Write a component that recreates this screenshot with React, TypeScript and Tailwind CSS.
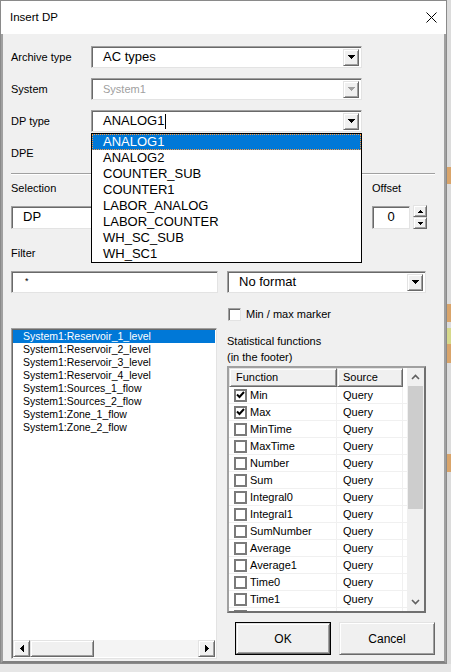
import React from 'react';

const sunken =
  'border border-t-[#a0a0a0] border-l-[#a0a0a0] border-r-[#e3e3e3] border-b-[#e3e3e3] shadow-[inset_1px_1px_0_#696969]';
const raised =
  'bg-[#f0f0f0] border border-t-[#e3e3e3] border-l-[#e3e3e3] border-r-[#696969] border-b-[#696969] shadow-[inset_1px_1px_0_#ffffff,inset_-1px_-1px_0_#a0a0a0]';

const Tri: React.FC<{ dir: 'up' | 'down' | 'left' | 'right'; color?: string; size?: number }> = ({
  dir,
  color = '#000',
  size = 7,
}) => {
  const h = Math.ceil(size / 2);
  const pts =
    dir === 'down'
      ? `0,0 ${size},0 ${size / 2},${h}`
      : dir === 'up'
        ? `0,${h} ${size},${h} ${size / 2},0`
        : dir === 'left'
          ? `${h},0 ${h},${size} 0,${size / 2}`
          : `0,0 0,${size} ${h},${size / 2}`;
  const w = dir === 'up' || dir === 'down' ? size : h;
  const hh = dir === 'up' || dir === 'down' ? h : size;
  return (
    <svg width={w} height={hh} viewBox={`0 0 ${w} ${hh}`} shapeRendering="crispEdges">
      <polygon points={pts} fill={color} />
    </svg>
  );
};

const Chevron: React.FC<{ up?: boolean }> = ({ up }) => (
  <svg width="9" height="6" viewBox="0 0 9 6">
    <path d={up ? 'M1 5l3.5-3.5L8 5' : 'M1 1l3.5 3.5L8 1'} stroke="#606060" strokeWidth="1.6" fill="none" />
  </svg>
);

interface ComboProps {
  text?: string;
  className: string;
  disabled?: boolean;
  textClass?: string;
  caret?: boolean;
}

const Combo: React.FC<ComboProps> = ({ text, className, disabled, textClass = 'text-[13px]', caret }) => (
  <div className={`${sunken} ${className} h-[22px] bg-white flex items-center`}>
    <span className={`flex-1 pl-[11px] flex items-center ${textClass} ${disabled ? 'text-[#a0a0a0]' : 'text-black'}`}>
      {text}
      {caret && <span className="inline-block w-px h-[15px] bg-black ml-px" />}
    </span>
    <div className={`${raised} w-[16px] h-[17px] mr-[2px] flex items-center justify-center`}>
      <Tri dir="down" color={disabled ? '#a0a0a0' : '#000'} />
    </div>
  </div>
);

const Check: React.FC<{ checked?: boolean; thin?: boolean }> = ({ checked, thin }) => (
  <div
    className={`w-[13px] h-[13px] bg-white flex items-center justify-center shrink-0 ${
      thin ? sunken : 'border-2 border-[#7a7a7a]'
    }`}
  >
    {checked && (
      <svg width="9" height="8" viewBox="0 0 9 8">
        <path d="M1 3.5l2.5 2.5L8 1" stroke="#000" strokeWidth="2" fill="none" />
      </svg>
    )}
  </div>
);

const dpTypes = ['ANALOG1', 'ANALOG2', 'COUNTER_SUB', 'COUNTER1', 'LABOR_ANALOG', 'LABOR_COUNTER', 'WH_SC_SUB', 'WH_SC1'];

const dps = [
  'System1:Reservoir_1_level',
  'System1:Reservoir_2_level',
  'System1:Reservoir_3_level',
  'System1:Reservoir_4_level',
  'System1:Sources_1_flow',
  'System1:Sources_2_flow',
  'System1:Zone_1_flow',
  'System1:Zone_2_flow',
];

const functions: { name: string; checked?: boolean }[] = [
  { name: 'Min', checked: true },
  { name: 'Max', checked: true },
  { name: 'MinTime' },
  { name: 'MaxTime' },
  { name: 'Number' },
  { name: 'Sum' },
  { name: 'Integral0' },
  { name: 'Integral1' },
  { name: 'SumNumber' },
  { name: 'Average' },
  { name: 'Average1' },
  { name: 'Time0' },
  { name: 'Time1' },
  { name: '' },
];

export default function App() {
  return (
    <div className="w-[451px] h-[672px] bg-[#e6e6e6] font-['Liberation_Sans',Arial,sans-serif] text-black text-[11px] flex">
      <div className="relative w-[447px] h-[664px] border border-[#8a8a8a] bg-[#f0f0f0] flex flex-col">
        {/* title bar */}
        <div className="h-[33px] bg-white flex items-center justify-between pl-[9px] pr-[9px] shrink-0">
          <span className="text-[11.5px]">Insert DP</span>
          <svg width="11" height="11" viewBox="0 0 11 11">
            <path d="M0.5 0.5l10 10M10.5 0.5l-10 10" stroke="#000" strokeWidth="1" />
          </svg>
        </div>

        {/* body */}
        <div className="flex-1 border-l-2 border-r-2 border-b-2 border-l-[#a0a0a0] border-r-[#a0a0a0] border-b-[#808080] pt-[12px] pl-[8px] pr-[8px] flex flex-col">
          <div className="flex items-center h-[22px]">
            <span className="w-[80px]">Archive type</span>
            <Combo text="AC types" className="w-[271px]" />
          </div>
          <div className="flex items-center h-[22px] mt-[10px]">
            <span className="w-[80px]">System</span>
            <Combo text="System1" className="w-[271px]" disabled textClass="text-[11px]" />
          </div>
          <div className="flex items-center h-[22px] mt-[10px]">
            <span className="w-[80px]">DP type</span>
            <Combo text="ANALOG1" className="w-[271px]" caret />
          </div>
          <div className="flex items-center h-[22px] mt-[10px]">
            <span className="w-[80px]">DPE</span>
            <Combo className="w-[271px]" />
          </div>

          <div className="mt-[9px] w-[424px] h-[2px] border-t border-t-[#a0a0a0] border-b border-b-white" />

          <div className="flex h-[14px] leading-[14px] mt-[6px]">
            <span className="w-[361px]">Selection</span>
            <span>Offset</span>
          </div>
          <div className="flex items-center h-[24px] mt-[10px]">
            <div className={`${sunken} w-[351px] h-[23px] bg-white flex items-center pl-[11px] text-[13px]`}>DP</div>
            <div className={`${sunken} w-[38px] h-[23px] bg-white ml-[10px] flex items-center justify-center text-[13px]`}>
              0
            </div>
            <div className="ml-[3px] w-[14px] h-[24px] flex flex-col">
              <div className={`${raised} h-[12px] flex items-center justify-center`}>
                <Tri dir="up" size={5} />
              </div>
              <div className={`${raised} h-[12px] flex items-center justify-center`}>
                <Tri dir="down" size={5} />
              </div>
            </div>
          </div>

          <div className="h-[14px] leading-[14px] mt-[17px]">Filter</div>
          <div className="flex items-center h-[22px] mt-[11px]">
            <div className={`${sunken} w-[207px] h-[22px] bg-white flex items-center pl-[13px] text-[9px]`}>*</div>
            <Combo text="No format" className="w-[199px] ml-[9px]" />
          </div>

          {/* lower section */}
          <div className="flex">
            {/* list */}
            <div className={`${sunken} mt-[35px] w-[206px] h-[331px] bg-white flex flex-col p-px`}>
              <div className="flex-1 flex flex-col text-[10.5px]">
                {dps.map((d, i) => (
                  <div
                    key={d}
                    className={`h-[13px] leading-[13px] pl-[10px] ${i === 0 ? 'bg-[#0078d7] text-white' : ''}`}
                  >
                    {d}
                  </div>
                ))}
              </div>
              <div className="h-[17px] flex">
                <div className={`${raised} w-[17px] h-[17px] flex items-center justify-center`}>
                  <Tri dir="left" />
                </div>
                <div className={`${raised} w-[64px] h-[17px]`} />
                <div className="flex-1 bg-[#f4f4f4]" />
                <div className={`${raised} w-[17px] h-[17px] flex items-center justify-center`}>
                  <Tri dir="right" />
                </div>
              </div>
            </div>

            {/* right column */}
            <div className="ml-[10px] w-[208px] flex flex-col">
              <div className="mt-[15px] h-[13px] flex items-center">
                <div className="ml-px">
                  <Check thin />
                </div>
                <span className="ml-[5px]">Min / max marker</span>
              </div>
              <div className="mt-[12px] leading-[16px]">
                Statistical functions
                <br />
                (in the footer)
              </div>
              <div className="mt-px w-[199px] h-[247px] border-2 border-t-[#a0a0a0] border-l-[#a0a0a0] border-r-[#707070] border-b-[#707070] bg-white flex overflow-hidden">
                <div className="flex-1 flex flex-col overflow-hidden">
                  <div className="h-[19px] flex shrink-0 bg-white">
                    <div className={`${raised} w-[108px] h-[19px] pl-[6px] flex items-center`}>Function</div>
                    <div className={`${raised} w-[66px] h-[19px] pl-[5px] flex items-center`}>Source</div>
                  </div>
                  {functions.map((f, i) => (
                    <div key={i} className="h-[17px] flex shrink-0 border-b border-b-[#f0f0f0]">
                      <div className="w-[108px] flex items-center pl-[5px] border-r border-r-[#f0f0f0]">
                        <Check checked={f.checked} />
                        <span className="ml-[3px]">{f.name}</span>
                      </div>
                      <div className="w-[66px] flex items-center pl-[6px] border-r border-r-[#f0f0f0]">
                        {f.name && 'Query'}
                      </div>
                    </div>
                  ))}
                </div>
                <div className="w-[17px] bg-[#f0f0f0] flex flex-col items-center">
                  <div className="h-[18px] flex items-center justify-center">
                    <Chevron up />
                  </div>
                  <div className="w-[15px] h-[123px] bg-[#cdcdcd]" />
                  <div className="flex-1" />
                  <div className="h-[18px] flex items-center justify-center">
                    <Chevron />
                  </div>
                </div>
              </div>
              <div className="mt-[9px] flex text-[12px]">
                <div className="ml-[8px] w-[96px] h-[33px] border border-black">
                  <div className={`${raised} w-full h-full flex items-center justify-center`}>OK</div>
                </div>
                <div className={`${raised} ml-[8px] w-[96px] h-[33px] flex items-center justify-center`}>Cancel</div>
              </div>
            </div>
          </div>
        </div>

        {/* open DP type dropdown */}
        <div className="absolute left-[90px] top-[132px] w-[271px] h-[130px] border border-black bg-white text-[13px]">
          {dpTypes.map((t, i) => (
            <div
              key={t}
              className={`h-[16px] leading-[14px] pl-[10px] ${
                i === 0 ? 'bg-[#0078d7] text-white border border-dotted border-[#ff9a3c]' : 'border border-transparent'
              }`}
            >
              {t}
            </div>
          ))}
        </div>
      </div>

      {/* strip of the window behind */}
      <div className="flex-1 flex flex-col bg-[#dcdcdc] h-[664px]">
        <div className="h-[167px]" />
        <div className="h-[17px] bg-[#d9a46a]" />
        <div className="h-[120px]" />
        <div className="h-[18px] bg-[#d9a46a]" />
        <div className="h-[6px]" />
        <div className="h-[16px] bg-[#d6d88a]" />
        <div className="h-[19px] bg-[#d9a46a]" />
        <div className="h-[91px]" />
        <div className="h-[18px] bg-[#d9a46a]" />
      </div>
    </div>
  );
}
